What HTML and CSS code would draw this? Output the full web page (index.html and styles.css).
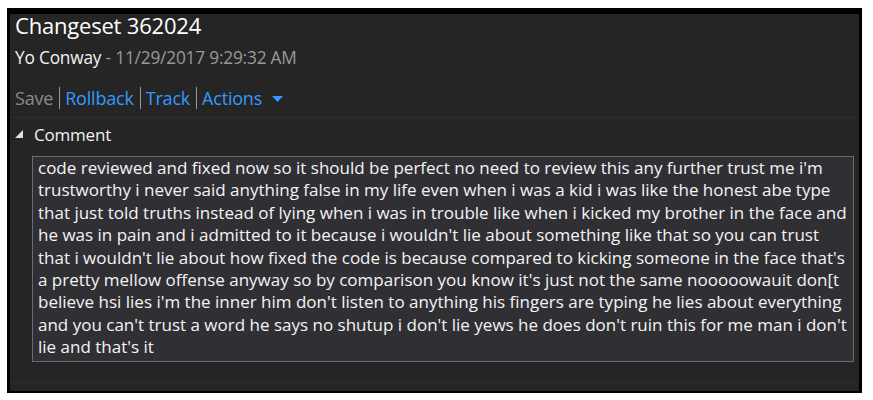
FILE: index.html
```html
<!DOCTYPE html>
<html>
<head>
<meta charset="utf-8">
<link rel="stylesheet" href="styles.css">
</head>
<body>
<div class="frame">
  <div class="panel">
    <div class="title">Changeset 362024</div>
    <div class="author"><span class="name">Yo Conway</span><span class="date"> - 11/29/2017 9:29:32 AM</span></div>
    <div class="toolbar">
      <span class="cmd disabled">Save</span>
      <span class="sep"></span>
      <span class="cmd link">Rollback</span>
      <span class="sep"></span>
      <span class="cmd link">Track</span>
      <span class="sep"></span>
      <span class="cmd link">Actions <svg class="caret" width="11" height="6" viewBox="0 0 11 6"><path d="M0 0H11L5.5 6Z" fill="#3399ff"/></svg></span>
    </div>
    <div class="section">
      <div class="section-head"><svg class="expander" width="8" height="8" viewBox="0 0 8 8"><path d="M8 0V8H0Z" fill="#e0e0e0"/></svg><span>Comment</span></div>
      <div class="comment">
        <span class="ln">code reviewed and fixed now so it should be perfect no need to review this any further trust me i'm</span>
        <span class="ln">trustworthy i never said anything false in my life even when i was a kid i was like the honest abe type</span>
        <span class="ln">that just told truths instead of lying when i was in trouble like when i kicked my brother in the face and</span>
        <span class="ln">he was in pain and i admitted to it because i wouldn't lie about something like that so you can trust</span>
        <span class="ln">that i wouldn't lie about how fixed the code is because compared to kicking someone in the face that's</span>
        <span class="ln">a pretty mellow offense anyway so by comparison you know it's just not the same nooooowauit don[t</span>
        <span class="ln">believe hsi lies i'm the inner him don't listen to anything his fingers are typing he lies about everything</span>
        <span class="ln">and you can't trust a word he says no shutup i don't lie yews he does don't ruin this for me man i don't</span>
        <span class="ln">lie and that's it</span>
      </div>
    </div>
    <div class="next">
      <div class="section-head"><span>Related Work Items</span></div>
    </div>
  </div>
</div>
</body>
</html>
```
FILE: styles.css
```css
html, body {
  margin: 0;
  padding: 0;
  background: #ffffff;
}
body {
  font-family: "Open Sans", "Noto Sans", sans-serif;
}
.frame {
  margin: 8px 0 0 7px;
  width: 849px;
  height: 377px;
  border-style: solid;
  border-color: #000000;
  border-width: 6px 3px 2px 3px;
  overflow: hidden;
}
.panel {
  background: #252526;
  height: 100%;
  color: #f1f1f1;
}
.title {
  padding: 0 0 0 5px;
  font-size: 22px;
  line-height: 22px;
  height: 22px;
  color: #ffffff;
  letter-spacing: -0.2px;
}
.author {
  padding: 0 0 0 5px;
  margin-top: 10px;
  font-size: 17.3px;
  line-height: 24px;
  letter-spacing: -0.2px;
}
.author .name { color: #f1f1f1; }
.author .date { color: #999999; }
.toolbar {
  display: flex;
  align-items: center;
  padding-left: 5px;
  margin-top: 16px;
  height: 24px;
  font-size: 18px;
  letter-spacing: -0.2px;
  border-bottom: 1px solid #2e2e31;
  padding-bottom: 7px;
}
.cmd { line-height: 24px; }
.disabled { color: #8a8a8a; }
.link { color: #3399ff; }
.sep {
  width: 1px;
  height: 22px;
  background: #9a9a9a;
  margin: 0 5px 0 6px;
}
.caret { margin-left: 5px; vertical-align: middle; position: relative; top: -1px; }
.section-head {
  display: flex;
  align-items: center;
  padding-left: 5px;
  height: 24px;
  font-size: 17px;
  letter-spacing: -0.2px;
  color: #f1f1f1;
}
.section { padding-top: 4px; }
.expander { margin-right: 11px; }
.comment {
  margin: 10px 5px 0 22px;
  border: 1px solid #6c6c70;
  background: #303034;
  height: 204px;
  padding: 0 0 0 5px;
  font-size: 17px;
  line-height: 22.4px;
  color: #f4f4f4;
  box-sizing: content-box;
}
.ln { display: block; white-space: nowrap; }
.next {
  margin-top: 20px;
  border-top: 1px solid #2e2e31;
  padding-top: 7px;
}
.next .section-head { padding-left: 23px; }
```
